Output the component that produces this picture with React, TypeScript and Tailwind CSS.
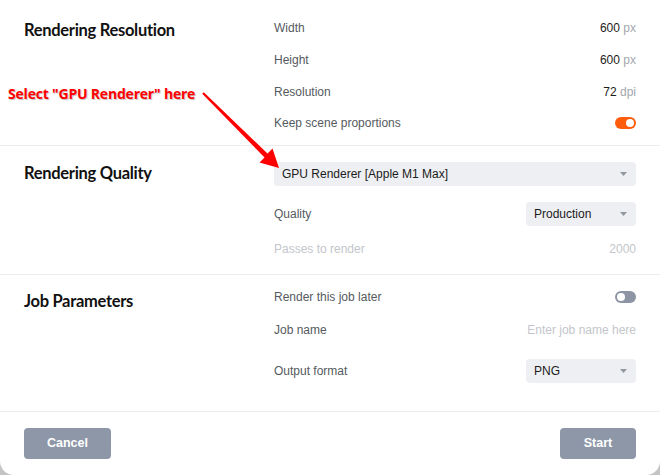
import React from "react";

const label = "text-[12px] text-[#555a60]";
const heading = "text-[16.5px] font-bold text-[#111] leading-5 tracking-[-0.3px]";

function Toggle({ on }: { on: boolean }) {
  return (
    <div
      className={`flex h-[12px] w-[21px] items-center rounded-full px-[2px] ${
        on ? "justify-end bg-[#ff5c0c]" : "justify-start bg-[#8d95a5]"
      }`}
    >
      <div className="h-[8px] w-[8px] rounded-full bg-white" />
    </div>
  );
}

function Chevron() {
  return (
    <svg width="7" height="4" viewBox="0 0 7 4" className="shrink-0">
      <path d="M0 0 L7 0 L3.5 4 Z" fill="#9097a0" />
    </svg>
  );
}

function Select({ value, className = "" }: { value: string; className?: string }) {
  return (
    <div
      className={`flex h-[24px] items-center justify-between rounded-[4px] bg-[#eeeff2] pl-[8px] pr-[9px] text-[12px] text-[#1b1b1b] ${className}`}
    >
      <span>{value}</span>
      <Chevron />
    </div>
  );
}

function Value({ num, unit }: { num: string; unit: string }) {
  return (
    <span className="text-[12px] text-[#1c1c1c]">
      {num} <span className="text-[#a3a7ae]">{unit}</span>
    </span>
  );
}

export default function App() {
  return (
    <div
      className="relative h-[475px] w-[660px] bg-[#c4c4c4]"
      style={{ fontFamily: '"Liberation Sans", Arial, sans-serif' }}
    >
      <div className="flex h-[475px] flex-col rounded-b-[14px] bg-white">
        {/* Rendering Resolution */}
        <section className="grid grid-cols-[274px_1fr] border-b border-[#ececec] pr-[24px] pt-[12px] pb-[7px]">
          <h2 className={`${heading} pl-[24px] pt-[8px]`} style={{ fontFamily: "Lato, sans-serif" }}>
            Rendering Resolution
          </h2>
          <div className="flex flex-col">
            <div className="flex h-[32px] items-center justify-between">
              <span className={label}>Width</span>
              <Value num="600" unit="px" />
            </div>
            <div className="flex h-[32px] items-center justify-between">
              <span className={label}>Height</span>
              <Value num="600" unit="px" />
            </div>
            <div className="flex h-[32px] items-center justify-between">
              <span className={label}>Resolution</span>
              <Value num="72" unit="dpi" />
            </div>
            <div className="flex h-[30px] items-center justify-between">
              <span className={label}>Keep scene proportions</span>
              <Toggle on />
            </div>
          </div>
        </section>

        {/* Rendering Quality */}
        <section className="grid grid-cols-[274px_1fr] border-b border-[#ececec] pr-[24px] pt-[16px] pb-[13px]">
          <h2 className={`${heading} pl-[24px] pt-[1px]`} style={{ fontFamily: "Lato, sans-serif" }}>
            Rendering Quality
          </h2>
          <div className="flex flex-col">
            <Select value="GPU Renderer [Apple M1 Max]" />
            <div className="mt-[16px] flex items-center justify-between">
              <span className={label}>Quality</span>
              <Select value="Production" className="w-[110px]" />
            </div>
            <div className="mt-[11px] flex h-[24px] items-center justify-between text-[12px] text-[#c3c6cb]">
              <span>Passes to render</span>
              <span>2000</span>
            </div>
          </div>
        </section>

        {/* Job Parameters */}
        <section className="grid grid-cols-[274px_1fr] border-b border-[#ececec] pr-[24px] pt-[14px] pb-[28px]">
          <h2 className={`${heading} pl-[24px] pt-[2px]`} style={{ fontFamily: "Lato, sans-serif" }}>
            Job Parameters
          </h2>
          <div className="flex flex-col">
            <div className="flex h-[16px] items-center justify-between">
              <span className={label}>Render this job later</span>
              <Toggle on={false} />
            </div>
            <div className="mt-[17px] flex h-[16px] items-center justify-between">
              <span className={label}>Job name</span>
              <span className="text-[12px] text-[#c3c6cb]">Enter job name here</span>
            </div>
            <div className="mt-[21px] flex items-center justify-between">
              <span className={label}>Output format</span>
              <Select value="PNG" className="w-[110px]" />
            </div>
          </div>
        </section>

        {/* Footer */}
        <footer className="flex items-center justify-between px-[24px] pt-[16px]">
          <button className="h-[31px] w-[87px] rounded-[4px] bg-[#8e97a8] text-[12.5px] font-bold text-white">
            Cancel
          </button>
          <button className="h-[31px] w-[76px] rounded-[4px] bg-[#8e97a8] text-[12.5px] font-bold text-white">
            Start
          </button>
        </footer>
      </div>

      {/* annotation */}
      <div
        className="absolute left-[8px] top-[83px] text-[14px] font-bold text-[#ff0000] tracking-[-0.2px]"
        style={{ fontFamily: '"Open Sans", sans-serif', textShadow: "1px 1px 1px rgba(0,0,0,0.25)" }}
      >
        Select "GPU Renderer" here
      </div>
      <svg className="pointer-events-none absolute left-0 top-0" width="660" height="475">
        <polygon
          points="203.8,92.2 202.2,93.8 264.5,157.5 259.5,162.5 279,168 272.5,148.5 267.5,153.5"
          fill="#ff0000"
        />
      </svg>
    </div>
  );
}
